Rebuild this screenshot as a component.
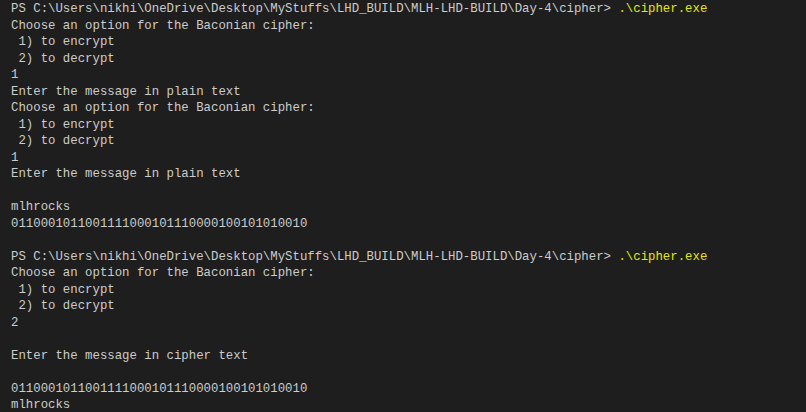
import React from "react";

const prompt = "PS C:\\Users\\nikhi\\OneDrive\\Desktop\\MyStuffs\\LHD_BUILD\\MLH-LHD-BUILD\\Day-4\\cipher> ";
const cmd = ".\\cipher.exe";

type Line = { t: string; cmd?: boolean };

const lines: Line[] = [
  { t: prompt, cmd: true },
  { t: "Choose an option for the Baconian cipher:" },
  { t: " 1) to encrypt" },
  { t: " 2) to decrypt" },
  { t: "1" },
  { t: "Enter the message in plain text" },
  { t: "Choose an option for the Baconian cipher:" },
  { t: " 1) to encrypt" },
  { t: " 2) to decrypt" },
  { t: "1" },
  { t: "Enter the message in plain text" },
  { t: "" },
  { t: "mlhrocks" },
  { t: "0110001011001111000101110000100101010010" },
  { t: "" },
  { t: prompt, cmd: true },
  { t: "Choose an option for the Baconian cipher:" },
  { t: " 1) to encrypt" },
  { t: " 2) to decrypt" },
  { t: "2" },
  { t: "" },
  { t: "Enter the message in cipher text" },
  { t: "" },
  { t: "0110001011001111000101110000100101010010" },
  { t: "mlhrocks" },
];

export default function App() {
  return (
    <div
      className="w-[806px] h-[412px] overflow-hidden bg-[#1e1e1e] text-[#cccccc] pl-[11px] pt-[1px] text-[12.35px] leading-[16.5px] whitespace-pre"
      style={{ fontFamily: '"Liberation Mono", "DejaVu Sans Mono", monospace' }}
    >
      {lines.map((l, i) => (
        <div key={i} className="h-[16.5px]">
          {l.t}
          {l.cmd && <span className="text-[#e5e510]">{cmd}</span>}
        </div>
      ))}
    </div>
  );
}
